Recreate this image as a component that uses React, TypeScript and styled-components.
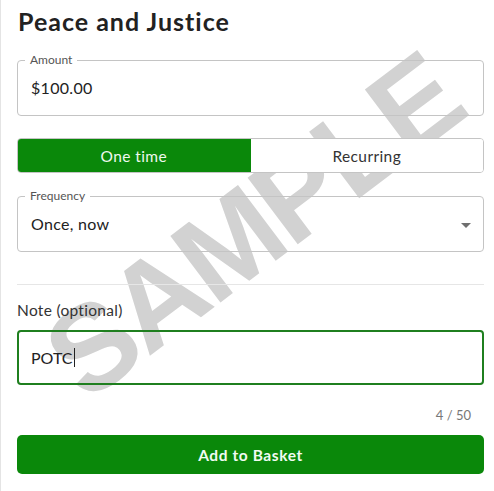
import React from "react";
import styled, { createGlobalStyle } from "styled-components";

const GlobalStyle = createGlobalStyle`
  html, body {
    margin: 0;
    padding: 0;
    background: #ffffff;
  }
  body {
    font-family: Lato, "Open Sans", Arial, sans-serif;
    color: #222;
  }
`;

const green = "#0a880a";

const Page = styled.div`
  position: relative;
  min-height: 491px;
  box-sizing: border-box;
  border-left: 1px solid #e4e4e4;
  padding: 0 10px 0 16px;
  overflow: hidden;
`;

const Watermark = styled.div`
  position: absolute;
  left: 252px;
  top: 226px;
  transform: translate(-50%, -50%) rotate(-37deg);
  font-family: "Liberation Sans", Arial, sans-serif;
  font-weight: 700;
  font-size: 121px;
  letter-spacing: -4px;
  line-height: 1;
  color: #d2d2d2;
  white-space: nowrap;
  pointer-events: none;
  user-select: none;
  z-index: 0;
`;

const Form = styled.div`
  position: relative;
  z-index: 1;
  display: flex;
  flex-direction: column;
`;

const Title = styled.h1`
  margin: 5px 0 0 1px;
  font-size: 25px;
  line-height: 32px;
  font-weight: 700;
  color: #222;
  letter-spacing: 1px;
`;

const Field = styled.fieldset<{ $top: number }>`
  margin: ${(p) => p.$top}px 0 0;
  padding: 0 13px;
  border: 1px solid #c4c4c4;
  border-radius: 4px;
  min-width: 0;
  display: flex;
  align-items: center;
  justify-content: space-between;
`;

const Legend = styled.legend`
  margin-left: -6px;
  padding: 0 5px;
  font-size: 12px;
  line-height: 14px;
  color: #555;
`;

const Value = styled.div`
  padding: 13px 0 19px;
  font-size: 16px;
  line-height: 16px;
  letter-spacing: 0.3px;
  color: #222;
`;

const Caret = styled.span`
  width: 0;
  height: 0;
  margin-right: -1px;
  margin-top: -4px;
  border-left: 5px solid transparent;
  border-right: 5px solid transparent;
  border-top: 5px solid #6f6f6f;
`;

const Toggle = styled.div`
  margin-top: 22px;
  display: grid;
  grid-template-columns: 1fr 1fr;
  height: 35px;
  box-sizing: border-box;
  border: 1px solid #c4c4c4;
  border-radius: 4px;
  overflow: hidden;
  background: #fff;
`;

const ToggleOption = styled.div<{ $active?: boolean }>`
  display: flex;
  align-items: center;
  justify-content: center;
  font-size: 15.5px;
  letter-spacing: 0.4px;
  background: ${(p) => (p.$active ? green : "#fff")};
  color: ${(p) => (p.$active ? "#eef8ee" : "#333")};
  margin: ${(p) => (p.$active ? "-1px 0 -1px -1px" : "0")};
  border-radius: ${(p) => (p.$active ? "4px 0 0 4px" : "0")};
`;

const Divider = styled.hr`
  margin: 32px 0 0;
  border: none;
  border-top: 1px solid #e6e6e6;
`;

const NoteLabel = styled.div`
  margin-top: 15px;
  font-size: 15.5px;
  line-height: 20px;
  letter-spacing: 0.3px;
  color: #333;
`;

const NoteBox = styled.div`
  margin-top: 10px;
  height: 55px;
  box-sizing: border-box;
  border: 2px solid #1f7f1f;
  border-radius: 4px;
  padding: 0 12px;
  display: flex;
  align-items: center;
  font-size: 16px;
  color: #222;
`;

const TextCursor = styled.span`
  display: inline-block;
  width: 1px;
  height: 19px;
  margin-left: 1px;
  background: #222;
`;

const Counter = styled.div`
  margin-top: 22px;
  padding-right: 13px;
  text-align: right;
  font-size: 13px;
  line-height: 16px;
  color: #777;
`;

const SubmitButton = styled.button`
  margin-top: 12px;
  height: 39px;
  border: none;
  border-radius: 5px;
  background: ${green};
  color: #f2fbf2;
  font-family: Lato, "Open Sans", Arial, sans-serif;
  font-size: 15.5px;
  font-weight: 700;
  letter-spacing: 0.6px;
  cursor: pointer;
`;

export default function App() {
  return (
    <>
      <GlobalStyle />
      <Page>
        <Watermark>SAMPLE</Watermark>
        <Form>
          <Title>Peace and Justice</Title>

          <Field $top={16}>
            <Legend>Amount</Legend>
            <Value>$100.00</Value>
          </Field>

          <Toggle>
            <ToggleOption $active>One time</ToggleOption>
            <ToggleOption>Recurring</ToggleOption>
          </Toggle>

          <Field $top={16}>
            <Legend>Frequency</Legend>
            <Value>Once, now</Value>
            <Caret />
          </Field>

          <Divider />

          <NoteLabel>Note (optional)</NoteLabel>
          <NoteBox>
            POTC
            <TextCursor />
          </NoteBox>
          <Counter>4 / 50</Counter>

          <SubmitButton>Add to Basket</SubmitButton>
        </Form>
      </Page>
    </>
  );
}
